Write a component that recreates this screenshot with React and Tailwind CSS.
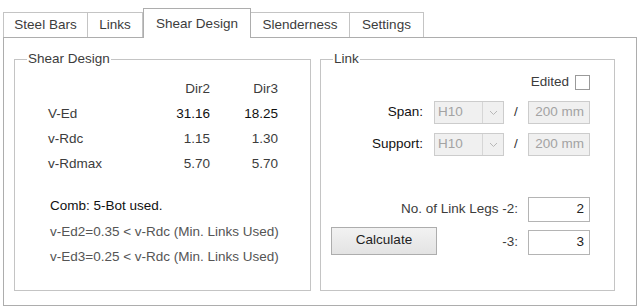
import React from "react";

const tabs = ["Steel Bars", "Links", "Shear Design", "Slenderness", "Settings"];
const tabWidths = ["w-[85px]", "w-[56px]", "w-[108px]", "w-[100px]", "w-[75px]"];

function GroupBox({ title, className, children }) {
  return (
    <div className={"relative border border-[#c4c4c4] " + className}>
      <span className="absolute -top-[9px] left-[12px] bg-white px-[1px] leading-[16px] text-[#3c3c3c]">
        {title}
      </span>
      {children}
    </div>
  );
}

function Combo() {
  return (
    <div className="flex h-[23px] w-[70px] border border-[#cccccc] bg-[#f0f0f0]">
      <div className="flex flex-1 items-center pl-[3px] text-[#a3a3a3]">H10</div>
      <div className="flex w-[21px] items-center justify-center border-l border-[#d6d6d6]">
        <svg width="9" height="6" viewBox="0 0 9 6">
          <path d="M1 1 L4.5 4.5 L8 1" fill="none" stroke="#b8b8b8" strokeWidth="1" />
        </svg>
      </div>
    </div>
  );
}

function DisabledBox() {
  return (
    <div className="flex h-[23px] w-[62px] items-center justify-end border border-[#cccccc] bg-[#f0f0f0] pr-[5px] text-[#a3a3a3]">
      200 mm
    </div>
  );
}

function NumBox({ value }) {
  return (
    <div className="flex h-[25px] w-[62px] items-center justify-end border border-[#b4b4b4] bg-white pr-[5px] text-[#222]">
      {value}
    </div>
  );
}

export default function App() {
  const rows = [
    ["V-Ed", "31.16", "18.25", true],
    ["v-Rdc", "1.15", "1.30", false],
    ["v-Rdmax", "5.70", "5.70", false],
  ];

  return (
    <div
      className="h-[307px] w-[637px] bg-white text-[13.5px] text-[#3c3c3c]"
      style={{ fontFamily: "Tahoma, 'Liberation Sans', Arial, sans-serif" }}
    >
      <div className="flex h-[37px] items-end pl-[3px]">
        {tabs.map((t, i) =>
          i === 2 ? (
            <div
              key={t}
              className={"relative z-10 -mb-px flex h-[30px] items-start justify-center border border-b-0 border-[#adadad] bg-white pt-[5px] " + tabWidths[i]}
            >
              {t}
            </div>
          ) : (
            <div
              key={t}
              className={"-ml-px flex h-[25px] items-center justify-center border border-b-0 border-[#c4c4c4] bg-white first:ml-0 " + tabWidths[i]}
            >
              {t}
            </div>
          )
        )}
      </div>
      <div className="ml-[3px] flex h-[269px] w-[634px] gap-[9px] border border-[#adadad] pl-[10px] pt-[21px]">
        <GroupBox title="Shear Design" className="h-[232px] w-[297px]">
          <div className="grid grid-cols-[110px_52px_68px] pl-[33px] pt-[16px] leading-[25px]">
            <div />
            <div className="text-right">Dir2</div>
            <div className="text-right">Dir3</div>
            {rows.map(([l, a, b, strong]) => (
              <React.Fragment key={l}>
                <div>{l}</div>
                <div className={"text-right " + (strong ? "text-[#111]" : "")}>{a}</div>
                <div className={"text-right " + (strong ? "text-[#111]" : "")}>{b}</div>
              </React.Fragment>
            ))}
          </div>
          <div className="pl-[35px] pt-[17px] leading-[25.5px]">
            <div className="text-[#111]">Comb: 5-Bot used.</div>
            <div className="text-[#555]">v-Ed2=0.35 &lt; v-Rdc (Min. Links Used)</div>
            <div className="text-[#555]">v-Ed3=0.25 &lt; v-Rdc (Min. Links Used)</div>
          </div>
        </GroupBox>
        <GroupBox title="Link" className="h-[232px] w-[295px]">
          <div className="flex flex-col pr-[24px] pt-[15px]">
            <div className="flex h-[14px] items-center justify-end gap-[6px]">
              <span>Edited</span>
              <div className="h-[15px] w-[15px] border border-[#9a9a9a] bg-white" />
            </div>
            <div className="mt-[12px] flex items-center justify-end">
              <span className="mr-[11px] text-[#111]">Span:</span>
              <Combo />
              <span className="w-[24px] text-center text-[#333]">/</span>
              <DisabledBox />
            </div>
            <div className="mt-[9px] flex items-center justify-end">
              <span className="mr-[11px] text-[#111]">Support:</span>
              <Combo />
              <span className="w-[24px] text-center text-[#333]">/</span>
              <DisabledBox />
            </div>
            <div className="mt-[41px] flex items-center justify-end">
              <span className="mr-[10px]">No. of Link Legs -2:</span>
              <NumBox value="2" />
            </div>
            <div className="mt-[8px] flex items-center">
              <button className="-mt-[4px] ml-[10px] h-[28px] w-[106px] border border-[#adadad] bg-[linear-gradient(#f2f2f2,#e3e3e3)] text-[#222]">
                Calculate
              </button>
              <span className="ml-auto mr-[10px]">-3:</span>
              <NumBox value="3" />
            </div>
          </div>
        </GroupBox>
      </div>
    </div>
  );
}
